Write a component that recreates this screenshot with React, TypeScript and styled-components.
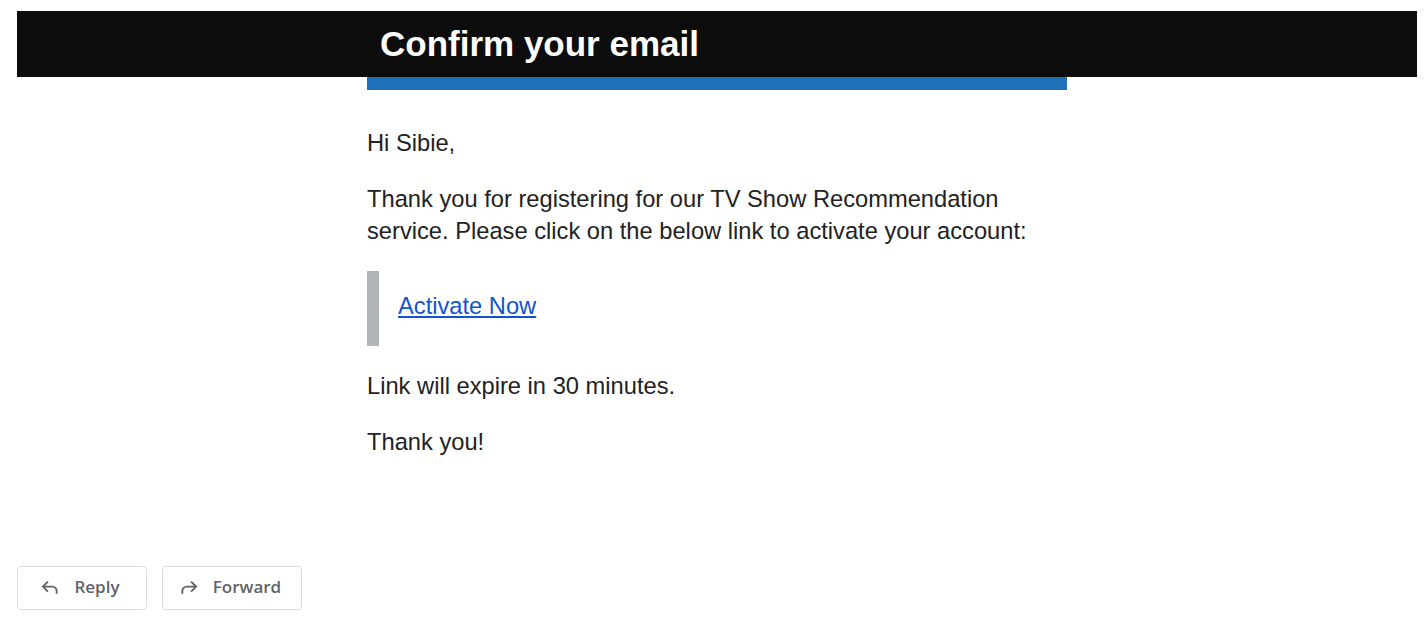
import React from "react";
import styled, { createGlobalStyle } from "styled-components";

const Global = createGlobalStyle`
  html, body { margin: 0; padding: 0; background: #ffffff; }
  body { font-family: "Liberation Sans", Arial, sans-serif; }
`;

const Page = styled.div`
  width: 1425px;
  height: 638px;
  padding: 11px 8px 0 17px;
  box-sizing: border-box;
  display: flex;
  flex-direction: column;
`;

const Header = styled.header`
  width: 1400px;
  height: 66px;
  background: #0c0d0c;
  display: flex;
  justify-content: center;
`;

const HeaderInner = styled.div`
  width: 700px;
  box-sizing: border-box;
  padding-left: 13px;
  display: flex;
  align-items: center;
`;

const Title = styled.h1`
  margin: 0;
  font-family: "Liberation Sans", Arial, sans-serif;
  font-weight: 700;
  font-size: 35px;
  color: #ffffff;
  line-height: 1;
  padding-bottom: 2px;
`;

const Column = styled.div`
  width: 700px;
  align-self: flex-start;
  margin-left: 350px;
  display: flex;
  flex-direction: column;
`;

const AccentBar = styled.div`
  height: 13px;
  background: #1f70b8;
`;

const Body = styled.div`
  padding-top: 37px;
  display: flex;
  flex-direction: column;
  gap: 24px;
`;

const Para = styled.p`
  margin: 0;
  font-family: "Liberation Sans", Arial, sans-serif;
  font-size: 23.7px;
  line-height: 32px;
  color: #222222;
`;

const Quote = styled.div`
  border-left: 12px solid #b2b5b8;
  height: 75px;
  box-sizing: border-box;
  padding-left: 19px;
  display: flex;
  align-items: center;
`;

const Link = styled.a`
  font-family: "Liberation Sans", Arial, sans-serif;
  font-size: 23.7px;
  line-height: 32px;
  color: #1155cc;
  text-decoration: underline;
  padding-bottom: 5px;
`;

const Actions = styled.div`
  margin-top: auto;
  margin-bottom: 28px;
  display: flex;
  gap: 15px;
`;

const ActionButton = styled.button<{ $w: number }>`
  width: ${(p) => p.$w}px;
  height: 44px;
  box-sizing: border-box;
  border: 1px solid #dadce0;
  border-radius: 4px;
  background: #ffffff;
  display: flex;
  align-items: center;
  justify-content: center;
  padding: 0 4px 2px 0;
  gap: 14px;
  font-family: "Open Sans", Roboto, sans-serif;
  font-weight: 600;
  font-size: 17px;
  line-height: 20px;
  color: #5f6368;
  cursor: pointer;
`;

const ReplyIcon = () => (
  <svg width="20" height="20" viewBox="0 0 24 24" fill="none" stroke="#5f6368" strokeWidth="2.3" strokeLinecap="butt" strokeLinejoin="miter">
    <path d="M9.5 5.5 L3.5 11.5 L9.5 17.5" />
    <path d="M4 11.5 H14.5 a5.5 5.5 0 0 1 5.5 5.5 V20" />
  </svg>
);

const ForwardIcon = () => (
  <svg width="20" height="20" viewBox="0 0 24 24" fill="none" stroke="#5f6368" strokeWidth="2.3" strokeLinecap="butt" strokeLinejoin="miter">
    <path d="M14.5 5.5 L20.5 11.5 L14.5 17.5" />
    <path d="M20 11.5 H9.5 a5.5 5.5 0 0 0 -5.5 5.5 V20" />
  </svg>
);

export default function App() {
  return (
    <>
      <Global />
      <Page>
        <Header>
          <HeaderInner>
            <Title>Confirm your email</Title>
          </HeaderInner>
        </Header>
        <Column>
          <AccentBar />
          <Body>
            <Para>Hi Sibie,</Para>
            <Para>
              Thank you for registering for our TV Show Recommendation
              <br />
              service. Please click on the below link to activate your account:
            </Para>
            <Quote>
              <Link href="#">Activate Now</Link>
            </Quote>
            <Para>Link will expire in 30 minutes.</Para>
            <Para>Thank you!</Para>
          </Body>
        </Column>
        <Actions>
          <ActionButton $w={130}>
            <ReplyIcon />
            Reply
          </ActionButton>
          <ActionButton $w={140}>
            <ForwardIcon />
            Forward
          </ActionButton>
        </Actions>
      </Page>
    </>
  );
}
